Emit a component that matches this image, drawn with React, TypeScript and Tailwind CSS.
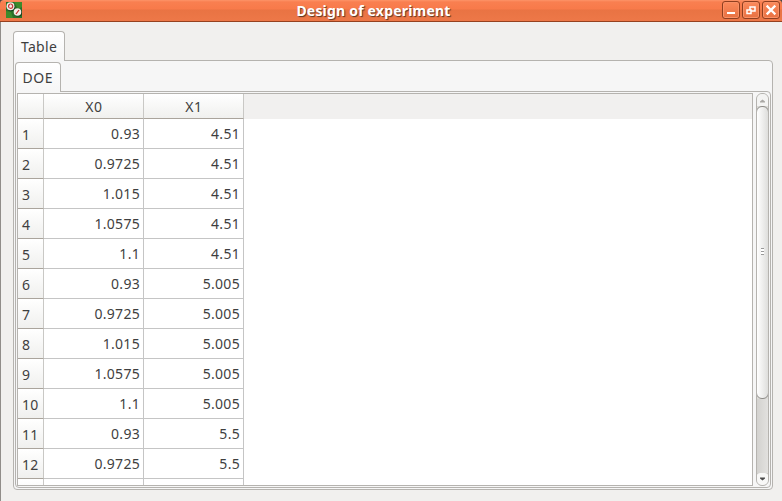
import type { ReactNode } from "react";

const rows: [string, string][] = [
  ["0.93", "4.51"],
  ["0.9725", "4.51"],
  ["1.015", "4.51"],
  ["1.0575", "4.51"],
  ["1.1", "4.51"],
  ["0.93", "5.005"],
  ["0.9725", "5.005"],
  ["1.015", "5.005"],
  ["1.0575", "5.005"],
  ["1.1", "5.005"],
  ["0.93", "5.5"],
  ["0.9725", "5.5"],
  ["", ""],
];

function AppIcon() {
  return (
    <svg className="ml-[6px] mt-[2px] size-4" viewBox="0 0 16 16">
      <rect width="16" height="16" fill="#28702a" />
      <path d="M8 0h8v5l-4 2zM0 9l5 1 2 6H0z" fill="#3c8a2c" />
      <circle cx="5" cy="5" r="4.3" fill="#14381a" />
      <circle cx="4.5" cy="4.3" r="4" fill="#f3eee6" />
      <circle cx="4.6" cy="4.2" r="2.1" fill="none" stroke="#c8383a" strokeWidth="1.2" />
      <path d="M4.6 2.5v2" stroke="#f3eee6" strokeWidth="1.2" />
      <circle cx="12" cy="10.5" r="4.1" fill="#14381a" />
      <circle cx="11.5" cy="10" r="3.8" fill="#f3eee6" />
      <path d="M10 12l3-4" stroke="#c62b2b" strokeWidth="1.2" />
    </svg>
  );
}

function WindowButton({ children }: { children: ReactNode }) {
  return (
    <div className="h-[18px] w-[18px] rounded-[3px] border border-[#8f3f20] bg-linear-to-b from-[#fb8a5c] to-[#e87142] shadow-[inset_0_0_0_1px_#fa9166]">
      <svg className="size-4" viewBox="0 0 16 16" fill="none" stroke="white">
        {children}
      </svg>
    </div>
  );
}

function TitleBar() {
  return (
    <div className="flex h-[22px] shrink-0 rounded-t-[4px] border-b border-[#96411f] bg-[linear-gradient(#fd9468_0,#f97f50_2px,#f87a4a_9px,#e97343_10px,#ed7848_21px)]">
      <AppIcon />
      <div className="ml-[3px] flex-1 text-center text-[14px] leading-[22px] font-bold tracking-[0.2px] text-white [text-shadow:1px_1px_1px_#5b3423]">
        Design of experiment
      </div>
      <div className="mt-px mr-[2px] flex gap-[2px]">
        <WindowButton>
          <path d="M4 11h8" strokeWidth="2" />
        </WindowButton>
        <WindowButton>
          <path d="M7 5h5v4h-5z" strokeWidth="1.5" />
          <path d="M4 8h4v3.5h-4z" strokeWidth="1.5" fill="#f07848" />
        </WindowButton>
        <WindowButton>
          <path d="M4.5 4.5l7 7M11.5 4.5l-7 7" strokeWidth="2.3" strokeLinecap="square" />
        </WindowButton>
      </div>
    </div>
  );
}

function Arrow({ up = false }: { up?: boolean }) {
  return (
    <svg className="h-[12px] w-[11px]" viewBox="0 0 11 12">
      <path d={up ? "M3 8.5h5v-1L5.5 5.5 3 7.5z" : "M3 4.5h5v1L5.5 7.5 3 5.5z"} fill={up ? "#a9a7a4" : "#4c4c4c"} />
    </svg>
  );
}

function ScrollBar() {
  return (
    <div className="flex w-[13px] flex-col overflow-hidden rounded-[6px] border border-[#b5b3af] bg-[#dcdbd8]">
      <div className="h-[12px] shrink-0 bg-[#f4f4f3]">
        <Arrow up />
      </div>
      <div className="-mx-px h-[293px] shrink-0 rounded-[6px] border border-[#8e8c88] bg-linear-to-r from-white to-[#dededc]">
        <div className="mx-auto mt-[141px] h-[7px] w-[3px] bg-[repeating-linear-gradient(#999_0_1px,#fff_1px_3px)]" />
      </div>
      <div className="-mt-[6px] flex-1 bg-linear-to-r from-[#d3d2cf] to-[#e2e1df] [clip-path:inset(6px_0_0_0)]" />
      <div className="-mt-px h-[13px] shrink-0 rounded-t-[3px] border-t border-[#b5b3af] bg-[#f8f8f7]">
        <Arrow />
      </div>
    </div>
  );
}

function HeaderCell({ children }: { children?: ReactNode }) {
  return (
    <div className="border-r border-b border-r-[#c9c8c5] border-b-[#aaa49c] bg-linear-to-b from-white to-[#f0f0ee] pl-px text-center text-[14px] leading-[26px] tracking-[0.6px]">
      {children}
    </div>
  );
}

function DataCell({ children }: { children: ReactNode }) {
  return (
    <div className="border-r border-b border-[#c5c5c5] pr-[3px] text-right text-[14px] leading-[29px] tracking-[0.3px]">
      {children}
    </div>
  );
}

function DataTable() {
  return (
    <div className="flex-1 overflow-hidden border border-[#b5b3af] bg-white">
      <div className="grid grid-cols-[26px_100px_100px_1fr] grid-rows-[25px] bg-[#f1f0ef]">
        <HeaderCell />
        <HeaderCell>X0</HeaderCell>
        <HeaderCell>X1</HeaderCell>
      </div>
      {rows.map(([x0, x1], i) => (
        <div key={i} className="grid grid-cols-[26px_100px_100px] grid-rows-[30px]">
          <div className="border-r border-b border-r-[#c9c8c5] border-b-[#aaa49c] bg-linear-to-b from-white to-[#f0f0ee] pl-[4px] text-[14px] leading-[31px] tracking-[0.2px]">
            {x0 && i + 1}
          </div>
          <DataCell>{x0}</DataCell>
          <DataCell>{x1}</DataCell>
        </div>
      ))}
    </div>
  );
}

export default function App() {
  return (
    <div className="h-[501px] w-[782px] overflow-hidden bg-[#4b4744] font-['Noto_Sans','Open_Sans',sans-serif] text-[#3f3f3f]">
      <div className="flex h-full flex-col">
        <TitleBar />
        <div className="flex min-h-0 flex-1 flex-col border-l border-[#918d89] bg-[#f1f0ee] pt-[9px] pr-[9px] pb-[11px] pl-[12px]">
          <div className="z-10 -mb-px h-[30px] w-[52px] shrink-0 rounded-t-[4px] border border-b-0 border-[#b5b3af] bg-linear-to-b from-white to-[#f6f6f6] pl-[7px] text-[14px] leading-[30px] tracking-[0.3px]">
            Table
          </div>
          <div className="flex min-h-0 flex-1 flex-col rounded-r-[4px] rounded-bl-[4px] border border-[#b5b3af] bg-[#f6f6f6] p-px">
            <div className="z-10 -mb-px h-[30px] w-[46px] shrink-0 rounded-t-[4px] border border-b-0 border-[#b5b3af] bg-linear-to-b from-white to-[#f6f6f6] pl-[6.5px] text-[14px] leading-[30px] tracking-[0.6px]">
              DOE
            </div>
            <div className="flex min-h-0 flex-1 gap-[3px] rounded-r-[4px] rounded-bl-[4px] border border-[#b5b3af] bg-[#f6f6f6] p-px">
              <DataTable />
              <ScrollBar />
            </div>
          </div>
        </div>
      </div>
    </div>
  );
}
